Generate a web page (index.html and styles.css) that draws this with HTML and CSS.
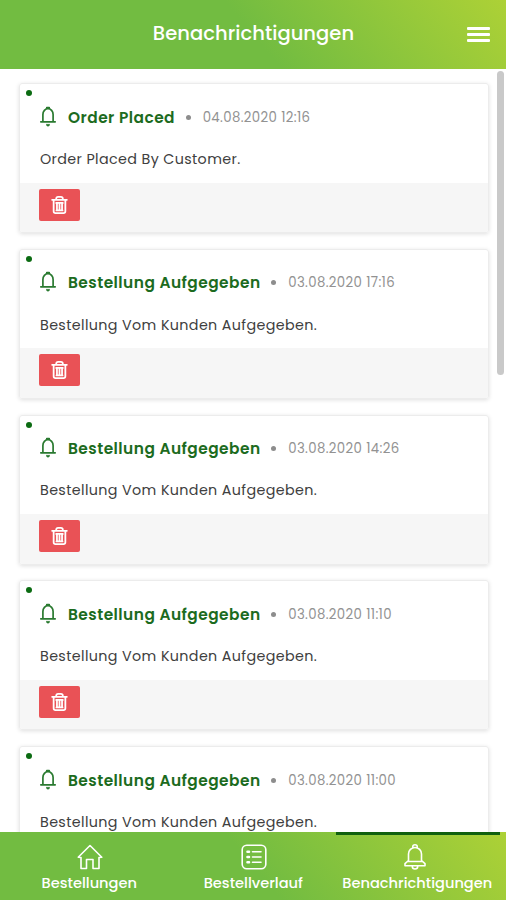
FILE: index.html
```html
<!DOCTYPE html>
<html lang="de">
<head>
<meta charset="utf-8">
<title>Benachrichtigungen</title>
<link rel="stylesheet" href="styles.css">
</head>
<body>
<svg class="defs" aria-hidden="true">
  <symbol id="bell" viewBox="0 0 18 21"><path d="M1.800 15.800h14.400M3.900 15.500V8.500a5.100 5.800 0 0 1 10.200 0v7M7.800 2.500V1.500h2.400v1M8 18.600a1 1 0 0 0 2 0"/></symbol>
  <symbol id="bell-wide" viewBox="0 0 24 26"><path d="M5.500 16.500V10a6.500 6.500 0 0 1 13 0v6.500l3.500 3.200v2H2v-2zM5.500 17.500h13M9.800 3.800V2.600a2.200 1.800 0 0 1 4.400 0v1.200M9.300 22.500a2.700 2.500 0 0 0 5.400 0"/></symbol>
  <symbol id="trash" viewBox="0 0 18 20"><path d="M1.200 4.500h15.600M5.500 4.300V3.500Q5.500 1.500 7.500 1.500h3q2 0 2 2v.8M2.800 5v11.500q0 2 2 2h8.400q2 0 2-2V5M5.500 7.800h7M6.300 8v7.500M9 8v7.500M11.700 8v7.500M5.800 15.700h6.400"/></symbol>
  <symbol id="house" viewBox="0 0 26 26"><path d="M4 13.500v11h5.500v-9h6.500v9H22v-11M4 13.500l-2.800-.3L13 1.500l11.800 11.700-2.800.3"/></symbol>
  <symbol id="list" viewBox="0 0 26 26"><rect x="1.200" y="1.200" width="23.600" height="23.600" rx="4.500"/><path d="M6.500 7.800h1.500M6.500 13h1.500M6.500 18.200h1.500" stroke-width="2.600"/><path d="M11.500 7.800h8.500M11.500 13h8.500M11.500 18.200h8.500"/></symbol>
</svg>
<div class="app">
  <header class="topbar">
    <h1 class="topbar-title">Benachrichtigungen</h1>
    <button class="menu" aria-label="Menü"><span></span><span></span><span></span></button>
  </header>
  <main class="feed">
    <article class="card">
      <div class="card-body">
        <div class="card-head"><svg class="bell"><use href="#bell"/></svg><h2 class="card-title">Order Placed</h2><i class="sep"></i><time class="date">04.08.2020 12:16</time></div>
        <p class="message">Order Placed By Customer.</p>
      </div>
      <div class="card-foot"><button class="delete" aria-label="Löschen"><svg><use href="#trash"/></svg></button></div>
    </article>
    <article class="card">
      <div class="card-body">
        <div class="card-head"><svg class="bell"><use href="#bell"/></svg><h2 class="card-title">Bestellung Aufgegeben</h2><i class="sep"></i><time class="date">03.08.2020 17:16</time></div>
        <p class="message">Bestellung Vom Kunden Aufgegeben.</p>
      </div>
      <div class="card-foot"><button class="delete" aria-label="Löschen"><svg><use href="#trash"/></svg></button></div>
    </article>
    <article class="card">
      <div class="card-body">
        <div class="card-head"><svg class="bell"><use href="#bell"/></svg><h2 class="card-title">Bestellung Aufgegeben</h2><i class="sep"></i><time class="date">03.08.2020 14:26</time></div>
        <p class="message">Bestellung Vom Kunden Aufgegeben.</p>
      </div>
      <div class="card-foot"><button class="delete" aria-label="Löschen"><svg><use href="#trash"/></svg></button></div>
    </article>
    <article class="card">
      <div class="card-body">
        <div class="card-head"><svg class="bell"><use href="#bell"/></svg><h2 class="card-title">Bestellung Aufgegeben</h2><i class="sep"></i><time class="date">03.08.2020 11:10</time></div>
        <p class="message">Bestellung Vom Kunden Aufgegeben.</p>
      </div>
      <div class="card-foot"><button class="delete" aria-label="Löschen"><svg><use href="#trash"/></svg></button></div>
    </article>
    <article class="card">
      <div class="card-body">
        <div class="card-head"><svg class="bell"><use href="#bell"/></svg><h2 class="card-title">Bestellung Aufgegeben</h2><i class="sep"></i><time class="date">03.08.2020 11:00</time></div>
        <p class="message">Bestellung Vom Kunden Aufgegeben.</p>
      </div>
      <div class="card-foot"><button class="delete" aria-label="Löschen"><svg><use href="#trash"/></svg></button></div>
    </article>
    <div class="scrollbar"></div>
  </main>
  <nav class="tabs">
    <a class="tab"><svg><use href="#house"/></svg><span>Bestellungen</span></a>
    <a class="tab"><svg><use href="#list"/></svg><span>Bestellverlauf</span></a>
    <a class="tab active"><svg><use href="#bell-wide"/></svg><span>Benachrichtigungen</span></a>
  </nav>
</div>
</body>
</html>
```
FILE: styles.css
```css
* { box-sizing: border-box; }
body { margin: 0; background: #fff; font-family: Poppins, Inter, "Liberation Sans", sans-serif; }
h1, h2, p { margin: 0; }
button { border: 0; padding: 0; }
svg { display: block; fill: none; stroke: currentColor; stroke-linejoin: round; stroke-linecap: round; }
.defs { display: none; }
.app { width: 506px; height: 900px; display: flex; flex-direction: column; overflow: hidden; }

.topbar { flex: 0 0 69px; display: grid; grid-template-columns: 1fr auto 1fr; align-items: center; padding: 0 16px 0 17px; color: #fff; background: linear-gradient(50deg, #72bc41 50%, #add136 100%); }
.topbar-title { grid-column: 2; margin-top: -2px; font-size: 19.500px; font-weight: 500; line-height: 28px; letter-spacing: 0.050px; white-space: nowrap; }
.menu { justify-self: end; display: flex; flex-direction: column; gap: 3px; width: 23px; background: none; }
.menu span { height: 3px; border-radius: 1px; background: #fff; }

.feed { position: relative; flex: 1; min-height: 0; overflow: hidden; padding: 14.300px 17px 0 19px; display: flex; flex-direction: column; gap: 15.700px; }
.card { flex: 0 0 150px; display: flex; flex-direction: column; position: relative; border-radius: 3px; overflow: hidden; border: 1px solid #ececec; box-shadow: 0 1px 4px rgba(0,0,0,.13); }
.card::before { content: ""; position: absolute; left: 6px; top: 6px; width: 6px; height: 6px; border-radius: 50%; background: #0b6b12; }
.card-body { flex: 1; padding: 19px 20px 0 20px; }
.card-head { display: flex; align-items: center; height: 28px; }
.bell { width: 18px; height: 21px; margin: -2px 11px 0 -1px; color: #2a7a30; stroke-width: 1.700; flex: none; }
.card-title { font-size: 15.400px; font-weight: 600; color: #1c6b20; letter-spacing: 0.470px; white-space: nowrap; }
.sep { width: 5px; height: 5px; border-radius: 50%; background: #8d8d8d; margin: 0 12px 0 10.600px; flex: none; }
.date { padding-top: 1px; font-size: 13.300px; color: #929292; letter-spacing: 0.360px; white-space: nowrap; }
.message { margin-top: 16.600px; font-size: 14.300px; line-height: 22px; color: #404040; letter-spacing: 0.370px; white-space: nowrap; }
.card-foot { flex: 0 0 49.500px; background: #f6f6f6; padding: 6px 19px; }
.delete { width: 41px; height: 32px; border-radius: 2px; background: #e95256; color: #fff; display: grid; place-items: center; }
.delete svg { width: 17px; height: 20px; stroke-width: 1.900; }
.scrollbar { position: absolute; right: 2px; top: 2px; width: 7px; height: 304px; border-radius: 4px; background: #c9c9c9; }

.tabs { flex: 0 0 68px; display: grid; grid-template-columns: 164px 164px 164px; padding-left: 8px; color: #fff; background: linear-gradient(50deg, #72bc41 50%, #add136 100%); }
.tab { display: flex; flex-direction: column; align-items: center; padding-top: 12px; }
.tab svg { width: 26px; height: 26px; stroke-width: 1.600; }
.tab span { margin: 3px 1.500px 0 0; font-size: 14.600px; font-weight: 500; line-height: 20px; white-space: nowrap; }
.active { box-shadow: inset 0 3px #10600f; }
.active svg { margin-left: -6px; }
```
